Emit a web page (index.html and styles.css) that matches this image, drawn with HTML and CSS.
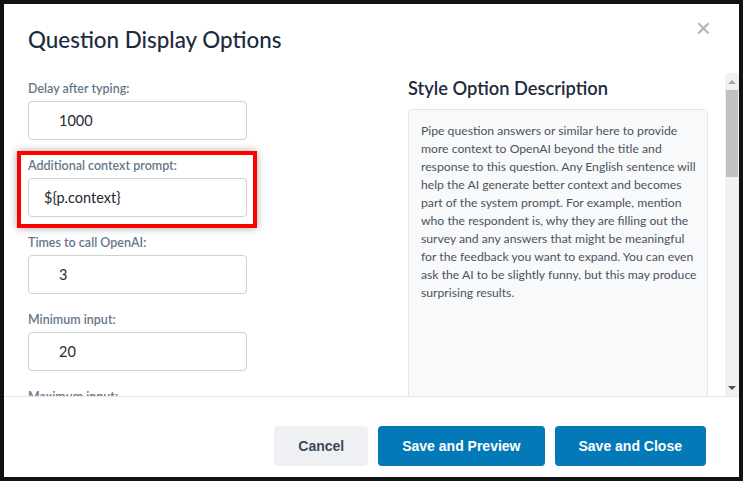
FILE: index.html
```html
<!DOCTYPE html>
<html lang="en">
  <head>
    <meta charset="UTF-8" />
    <meta name="viewport" content="width=device-width, initial-scale=1.0" />
    <title>Question Display Options</title>
    <link rel="stylesheet" href="styles.css">
  </head>
  <body>
    <div class="modal">
      <div class="modal-header">
        <h2 class="modal-title">Question Display Options</h2>
        <button type="button" class="close" aria-label="Close">&times;</button>
      </div>

      <div class="modal-body">
        <div class="body-content">
          <form class="options-form">
            <div class="field">
              <label for="delay">Delay after typing:</label>
              <input type="text" id="delay" class="num" value="1000" />
            </div>

            <div class="field highlight">
              <label for="context">Additional context prompt:</label>
              <input type="text" id="context" value="${p.context}" />
            </div>

            <div class="field">
              <label for="times">Times to call OpenAI:</label>
              <input type="text" id="times" class="num" value="3" />
            </div>

            <div class="field">
              <label for="minInput">Minimum input:</label>
              <input type="text" id="minInput" class="num" value="20" />
            </div>

            <div class="field">
              <label for="maxInput">Maximum input:</label>
              <input type="text" id="maxInput" class="num" value="200" />
            </div>
          </form>

          <div class="description">
            <h3>Style Option Description</h3>
            <div class="description-box">
              Pipe question answers or similar here to provide<br />
              more context to OpenAI beyond the title and<br />
              response to this question. Any English sentence will<br />
              help the AI generate better context and becomes<br />
              part of the system prompt. For example, mention<br />
              who the respondent is, why they are filling out the<br />
              survey and any answers that might be meaningful<br />
              for the feedback you want to expand. You can even<br />
              ask the AI to be slightly funny, but this may produce<br />
              surprising results.
            </div>
          </div>
        </div>

        <div class="scrollbar">
          <span class="arrow up"></span>
          <span class="thumb"></span>
          <span class="track"></span>
          <span class="arrow down"></span>
        </div>
      </div>

      <div class="modal-footer">
        <button type="button" class="btn btn-light">Cancel</button>
        <button type="button" class="btn btn-primary">Save and Preview</button>
        <button type="button" class="btn btn-primary">Save and Close</button>
      </div>
    </div>
  </body>
</html>
```

FILE: styles.css
```css
* {
  box-sizing: border-box;
}

body {
  margin: 0;
  font-family: Lato, "Noto Sans", sans-serif;
  background: #000;
}

.modal {
  width: 743px;
  height: 481px;
  border: 4px solid #111;
  background: #fff;
  display: flex;
  flex-direction: column;
}

.modal-header {
  height: 69px;
  flex-shrink: 0;
  display: flex;
  justify-content: space-between;
  align-items: flex-start;
  padding: 0 28px 0 24px;
}

.modal-title {
  margin: 21px 0 0;
  font-size: 22.4px;
  font-weight: 500;
  line-height: 30px;
  color: #1c2b3d;
}

.close {
  margin-top: 10px;
  padding: 0;
  border: none;
  background: none;
  font-family: "Liberation Sans", Arial, sans-serif;
  font-size: 26px;
  line-height: 28px;
  color: #b3b3b3;
  cursor: pointer;
}

.modal-body {
  height: 323px;
  flex-shrink: 0;
  display: flex;
  overflow: hidden;
}

.body-content {
  flex: 1;
  display: flex;
  padding-left: 24px;
  overflow: hidden;
}

.options-form {
  width: 380px;
  padding-top: 8px;
}

.field {
  margin-bottom: 18px;
}

.field label {
  display: block;
  margin-bottom: 4px;
  font-size: 12.5px;
  font-weight: 600;
  line-height: 16px;
  color: #66768a;
}

.field input {
  display: block;
  width: 219px;
  height: 39px;
  padding: 0 15px;
  border: 1px solid #ccd1d6;
  border-radius: 4px;
  font-family: inherit;
  font-size: 14.5px;
  color: #1f2933;
}

.field input.num {
  padding-left: 30px;
}

/* red call-out around the context prompt */
.field.highlight {
  width: 240px;
  margin: -7px 0 7px -11px;
  padding: 3px 6px 7px 7px;
  border: 4px solid #f00;
  box-shadow: 0 0 8px rgba(0, 0, 0, 0.35);
}

.description {
  width: 300px;
  padding-top: 3px;
}

.description h3 {
  margin: 0 0 9px;
  font-size: 18.3px;
  font-weight: 600;
  line-height: 24px;
  color: #1c2b3d;
}

.description-box {
  height: 400px;
  padding: 12px 4px 11px 12px;
  background: #f8f9fa;
  border: 1px solid #e2e5e9;
  border-radius: 4px;
  font-size: 12.2px;
  line-height: 18px;
  color: #4a5360;
  white-space: nowrap;
}

.scrollbar {
  width: 14px;
  flex-shrink: 0;
  display: flex;
  flex-direction: column;
  align-items: center;
  background: #f1f1f1;
}

.arrow {
  height: 17px;
  width: 100%;
  display: flex;
  align-items: center;
  justify-content: center;
}

.arrow::before {
  content: "";
  border-left: 4px solid transparent;
  border-right: 4px solid transparent;
}

.arrow.up::before {
  border-bottom: 4px solid #a3a3a3;
}

.arrow.down::before {
  border-top: 4px solid #505050;
}

.thumb {
  width: 12px;
  height: 87px;
  background: #c1c1c1;
}

.track {
  flex: 1;
}

.modal-footer {
  flex: 1;
  display: flex;
  justify-content: flex-end;
  align-items: flex-start;
  gap: 10px;
  padding: 29px 33px 0 0;
  border-top: 1px solid #e4e6e8;
}

.btn {
  height: 40px;
  padding: 0 24px;
  border: none;
  border-radius: 4px;
  font-family: "Liberation Sans", Arial, sans-serif;
  font-size: 14px;
  font-weight: bold;
  cursor: pointer;
}

.btn-light {
  background: #eef0f3;
  color: #3b4a5a;
}

.btn-primary {
  background: #0479b7;
  color: #fff;
}
```
